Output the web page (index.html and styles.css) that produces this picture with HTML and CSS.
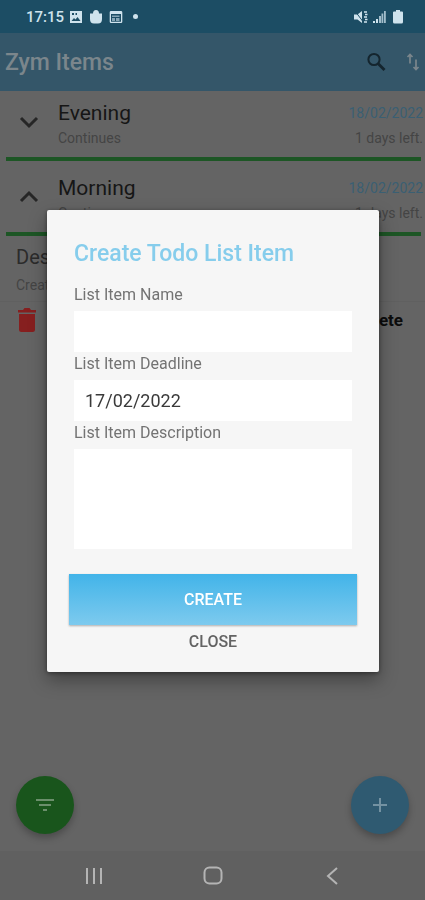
FILE: index.html
```html
<!DOCTYPE html>
<html lang="en">
  <head>
    <meta charset="UTF-8" />
    <meta name="viewport" content="width=device-width, initial-scale=1.0" />
    <title>Zym Items</title>
    <link rel="stylesheet" href="styles.css">
  </head>
  <body>
    <div class="app">
      <!-- Status bar -->
      <div class="status-bar">
        <span class="clock">17:15</span>
        <svg width="14" height="14" viewBox="0 0 14 14">
          <path fill-rule="evenodd" d="M1 1h12v12H1zM2.500 11h9L8.500 7 6.500 9.500 5 8zM3 3v2h2V3zM6.500 3v2h1.500V3z" />
        </svg>
        <svg class="gap" width="14" height="14" viewBox="0 0 14 14">
          <path d="M1 3.500h3a3 3.500 0 0 1 6 0h3V9q0 4.500-4 4.500H5Q1 13.500 1 9z" />
        </svg>
        <svg class="gap" width="14" height="14" viewBox="0 0 14 14">
          <path fill-rule="evenodd" d="M2 1h10q1.300 0 1.300 1.300v9.400Q13.300 13 12 13H2Q.7 13 .7 11.700V2.300Q.7 1 2 1zM2 4v7.700h10V4z" />
          <path d="M3 5.500h7.500v1.500H3zM3 8h3v3H3zM7 8h3.500v3H7z" opacity=".6" />
        </svg>
        <span class="dot"></span>
        <span class="spacer"></span>
        <svg width="14" height="14" viewBox="0 0 14 14">
          <path d="M0 4.500h3.500L8 1v12l-4.500-3.500H0z" />
          <path d="M1 1l9 12" stroke="#1c4d64" stroke-width="1" />
          <path d="M10 2h3M11 4.500h2.500M10 7h3M11 9.500h2.500M10 12h3" stroke="#cfe3ed" stroke-width="1.600" />
        </svg>
        <svg width="13" height="14" viewBox="0 0 13 14">
          <path d="M0 11h2v2H0zM3 9h2v4H3z" />
          <path d="M6 6h2v7H6zM8.500 3.500h1.800V13H8.500zM11 1h1.800v12H11z" opacity=".75" />
        </svg>
        <svg width="14" height="14" viewBox="0 0 14 14">
          <path d="M5 0h4v1.500h2q1 0 1 1V12q0 1.500-1.500 1.500h-7Q2 13.500 2 12V2.500q0-1 1-1h2z" />
        </svg>
      </div>

      <!-- App bar -->
      <header class="app-bar">
        <h1>Zym Items</h1>
        <button class="icon-button" aria-label="Search">
          <svg width="22" height="22" viewBox="0 0 22 22" fill="none" stroke="#14252e">
            <circle cx="8" cy="8.500" r="5.600" stroke-width="2" />
            <path d="M12 12.500l6.500 6.500" stroke-width="2.800" />
          </svg>
        </button>
        <button class="icon-button" aria-label="Sort">
          <svg width="18" height="22" viewBox="0 0 18 22" fill="none" stroke="#7b868c" stroke-width="1.700">
            <path d="M6 12.500V4M3.500 6l2.500-2.500L8.500 6M12 8.500v10M9.500 16l2.500 2.500 2.500-2.500" />
          </svg>
        </button>
      </header>

      <!-- List -->
      <main class="list">
        <section class="item">
          <button class="toggle" aria-label="Expand Evening">
            <svg width="20" height="14" viewBox="0 0 20 14"><path d="M2 3l8 8 8-8" /></svg>
          </button>
          <div class="item-text">
            <h2>Evening</h2>
            <p>Continues</p>
          </div>
          <div class="item-date">
            <time datetime="2022-02-18">18/02/2022</time>
            <p>1 days left.</p>
          </div>
        </section>
        <section class="item">
          <button class="toggle" aria-label="Collapse Morning">
            <svg width="20" height="14" viewBox="0 0 20 14"><path d="M2 11l8-8 8 8" /></svg>
          </button>
          <div class="item-text">
            <h2>Morning</h2>
            <p>Continues</p>
          </div>
          <div class="item-date">
            <time datetime="2022-02-18">18/02/2022</time>
            <p>1 days left.</p>
          </div>
        </section>
        <div class="details">
          <h3>Desc</h3>
          <p>Created</p>
        </div>
        <div class="actions">
          <button class="icon-button" aria-label="Remove">
            <svg width="20" height="26" viewBox="0 0 20 26" fill="#861f1f">
              <path d="M1 3h5l1.500-2h5L14 3h5v2.500H1zM2 7h16v15.500q0 2.500-2.500 2.500h-11Q2 25 2 22.500z" />
            </svg>
          </button>
          <button class="complete">Complete</button>
        </div>
      </main>

      <!-- Floating buttons -->
      <div class="fabs">
        <button class="fab fab-filter" aria-label="Filter">
          <svg width="20" height="16" viewBox="0 0 20 16" stroke="#6b8f6c" stroke-width="2">
            <path d="M1 3h18M4 8h12M8 13h4" />
          </svg>
        </button>
        <button class="fab fab-add" aria-label="Add item">
          <svg width="16" height="16" viewBox="0 0 16 16" stroke="#7492a2" stroke-width="2">
            <path d="M8 1v14M1 8h14" />
          </svg>
        </button>
      </div>

      <!-- Navigation bar -->
      <nav class="nav-bar">
        <button class="icon-button" aria-label="Recents">
          <svg width="20" height="20" viewBox="0 0 20 20"><path d="M3 2v16M10 2v16M17 2v16" /></svg>
        </button>
        <button class="icon-button" aria-label="Home">
          <svg width="20" height="20" viewBox="0 0 20 20"><rect x="1.500" y="1.500" width="17" height="16" rx="5" /></svg>
        </button>
        <button class="icon-button" aria-label="Back">
          <svg width="20" height="20" viewBox="0 0 20 20"><path d="M15 2l-9 8 9 8" /></svg>
        </button>
      </nav>
    </div>

    <!-- Create dialog -->
    <div class="overlay">
      <form class="dialog" role="dialog" aria-labelledby="dialog-title">
        <h2 id="dialog-title">Create Todo List Item</h2>
        <div class="fields">
          <label for="name">List Item Name</label>
          <input type="text" id="name" />
          <label for="deadline">List Item Deadline</label>
          <input type="text" id="deadline" value="17/02/2022" />
          <label for="description">List Item Description</label>
          <textarea id="description"></textarea>
        </div>
        <button type="submit" class="create">CREATE</button>
        <button type="button" class="close">CLOSE</button>
      </form>
    </div>
  </body>
</html>
```
FILE: styles.css
```css
* {
  box-sizing: border-box;
}

body {
  margin: 0;
  font-family: Roboto, "Liberation Sans", sans-serif;
  background-color: #646464;
}

h1,
h2,
h3,
p {
  margin: 0;
  font-weight: 400;
}

button {
  padding: 0;
  border: 0;
  background: none;
  font-family: inherit;
  cursor: pointer;
}

svg {
  display: block;
  flex: none;
}

.app {
  display: flex;
  flex-direction: column;
  min-height: 100vh;
}

/* Status bar */
.status-bar {
  display: flex;
  align-items: center;
  gap: 5px;
  height: 33px;
  padding: 0 20px 0 26px;
  background-color: #1c4d64;
  color: #cfe3ed;
  fill: #cfe3ed;
}

.clock {
  font-size: 15px;
  font-weight: 500;
}

.gap {
  margin-left: 1px;
}

.dot {
  width: 5px;
  height: 5px;
  margin-left: 5px;
  border-radius: 50%;
  background-color: #cfe3ed;
}

.spacer {
  flex: 1;
}

/* App bar */
.app-bar {
  display: flex;
  align-items: center;
  gap: 16px;
  height: 58px;
  padding: 0 3px 0 5px;
  background-color: #345669;
}

.app-bar h1 {
  flex: 1;
  color: #7b868c;
  font-size: 23px;
  font-weight: 500;
}

.icon-button {
  display: flex;
  align-items: center;
  justify-content: center;
}

/* List */
.list {
  flex: 1;
}

.item {
  display: flex;
  height: 75px;
  margin: 0 4px 0 6px;
  padding-top: 8px;
  background: linear-gradient(#1d5625, #1d5625) 0 66px / 100% 4px no-repeat;
}

.toggle {
  display: flex;
  align-items: center;
  justify-content: center;
  width: 46px;
  height: 46px;
}

.toggle svg {
  fill: none;
  stroke: #262626;
  stroke-width: 3;
}

.item-text {
  flex: 1;
  padding-left: 6px;
}

.item-text h2 {
  color: #161616;
  font-size: 21px;
  line-height: 28px;
}

.item p,
.details p {
  color: #444;
  font-size: 14px;
  line-height: 22px;
}

.item-date {
  text-align: right;
  margin-right: -2px;
}

.item-date time {
  display: block;
  color: #3a5f73;
  font-size: 14px;
  line-height: 28px;
}

.details {
  padding: 2px 16px;
  border-bottom: 1px solid #606060;
}

.details h3 {
  color: #2b2b2b;
  font-size: 20px;
  line-height: 28px;
}

.details p {
  line-height: 28px;
}

.actions {
  display: flex;
  align-items: center;
  justify-content: space-between;
  height: 36px;
  padding: 0 22px 0 17px;
}

.complete {
  color: #0c0c0c;
  font-size: 17px;
  font-weight: 700;
}

/* Floating buttons */
.fabs {
  display: flex;
  justify-content: space-between;
  padding: 0 16px 17px;
}

.fab {
  display: flex;
  align-items: center;
  justify-content: center;
  width: 58px;
  height: 58px;
  border-radius: 50%;
  box-shadow: 0 4px 7px rgba(0, 0, 0, 0.25);
}

.fab-filter {
  background-color: #19551c;
}

.fab-add {
  background-color: #2f5a71;
}

/* Navigation bar */
.nav-bar {
  display: flex;
  justify-content: center;
  gap: 99px;
  height: 49px;
  background-color: #606060;
}

.nav-bar svg {
  fill: none;
  stroke: #b4b4b4;
  stroke-width: 2;
}

/* Dialog */
.overlay {
  position: fixed;
  inset: 0;
  display: flex;
  align-items: center;
  padding: 0 46px 18px 47px;
}

.dialog {
  display: flex;
  flex-direction: column;
  width: 100%;
  padding: 28px 22px 15px;
  border-radius: 2px;
  background-color: #f6f6f6;
  box-shadow: 0 8px 18px rgba(0, 0, 0, 0.35), 0 1px 4px rgba(0, 0, 0, 0.4);
}

.dialog h2 {
  padding: 0 5px;
  color: #86cdec;
  font-size: 23px;
  font-weight: 500;
  line-height: 32px;
}

.fields {
  display: flex;
  flex-direction: column;
  padding: 13px 5px 25px;
}

.fields label {
  color: #737373;
  font-size: 16px;
  line-height: 24px;
  padding-bottom: 4px;
}

.fields input,
.fields textarea {
  width: 100%;
  height: 41px;
  padding: 0 11px;
  border: 0;
  background-color: #fff;
  color: #3a3a3a;
  font-family: inherit;
  font-size: 18px;
}

.fields textarea {
  height: 100px;
  padding: 11px;
  resize: none;
}

.create {
  height: 51px;
  background: linear-gradient(#42b4e9, #7dcaee);
  box-shadow: 0 1px 2px rgba(0, 0, 0, 0.3);
  color: #fff;
  font-size: 16px;
  font-weight: 500;
}

.close {
  height: 32px;
  color: #636363;
  font-size: 16px;
  font-weight: 500;
}
```
